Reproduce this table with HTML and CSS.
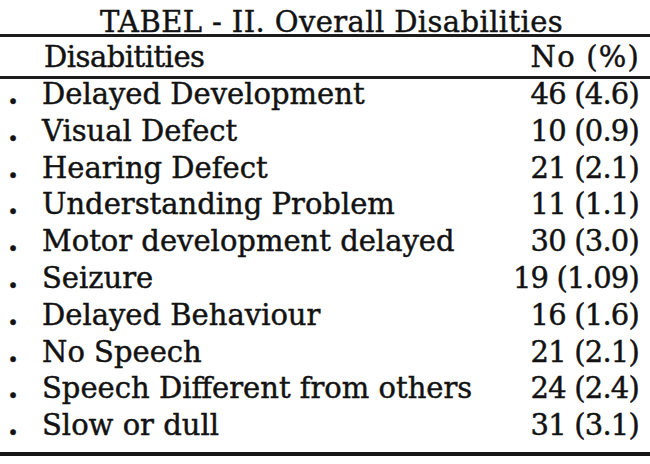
FILE: index.html
```html
<!DOCTYPE html>
<html lang="en">
<head>
<meta charset="utf-8">
<title>TABEL - II. Overall Disabilities</title>
<link rel="stylesheet" href="styles.css">
</head>
<body>
<div class="sheet">
  <div class="title">TABEL - II. Overall Disabilities</div>
  <div class="head">
    <span class="head-label">Disabitities</span>
    <span class="head-value">No (%)</span>
  </div>
  <ul class="rows">
    <li class="row"><span class="dot">.</span><span class="label">Delayed Development</span><span class="value">46 (4.6)</span></li>
    <li class="row"><span class="dot">.</span><span class="label">Visual Defect</span><span class="value">10 (0.9)</span></li>
    <li class="row"><span class="dot">.</span><span class="label">Hearing Defect</span><span class="value">21 (2.1)</span></li>
    <li class="row"><span class="dot">.</span><span class="label">Understanding Problem</span><span class="value">11 (1.1)</span></li>
    <li class="row"><span class="dot">.</span><span class="label">Motor development delayed</span><span class="value">30 (3.0)</span></li>
    <li class="row"><span class="dot">.</span><span class="label">Seizure</span><span class="value">19 (1.09)</span></li>
    <li class="row"><span class="dot">.</span><span class="label">Delayed Behaviour</span><span class="value">16 (1.6)</span></li>
    <li class="row"><span class="dot">.</span><span class="label">No Speech</span><span class="value">21 (2.1)</span></li>
    <li class="row"><span class="dot">.</span><span class="label">Speech Different from others</span><span class="value">24 (2.4)</span></li>
    <li class="row"><span class="dot">.</span><span class="label">Slow or dull</span><span class="value">31 (3.1)</span></li>
  </ul>
</div>
</body>
</html>
```

FILE: styles.css
```css
html, body {
  margin: 0;
  padding: 0;
  background: #ffffff;
}

.sheet {
  width: 650px;
  font-family: "DejaVu Serif", "Liberation Serif", serif;
  font-size: 29px;
  color: #121212;
  -webkit-text-stroke: 0.45px #121212;
}

.title {
  padding: 10px 0 0 13px;
  line-height: 24px;
  text-align: center;
  letter-spacing: 0.4px;
  border-bottom: 3px solid #1c1c1c;
}

.head {
  display: flex;
  justify-content: space-between;
  align-items: baseline;
  padding: 1px 10px 0 44px;
  line-height: 38px;
  border-bottom: 3px solid #1c1c1c;
}

.head-label {
  letter-spacing: -0.5px;
}

.head-value {
  letter-spacing: 1.2px;
}

.rows {
  list-style: none;
  margin: 0;
  padding: 0 0 5px 0;
  border-bottom: 4px solid #161616;
}

.row {
  display: flex;
  align-items: baseline;
  line-height: 30px;
  padding-bottom: 6.8px;
}

.dot {
  width: 42px;
  padding-left: 8px;
  box-sizing: border-box;
  font-weight: bold;
}

.label {
  flex: 1;
}

.value {
  padding-right: 11px;
  letter-spacing: -0.8px;
  text-align: right;
}
```
